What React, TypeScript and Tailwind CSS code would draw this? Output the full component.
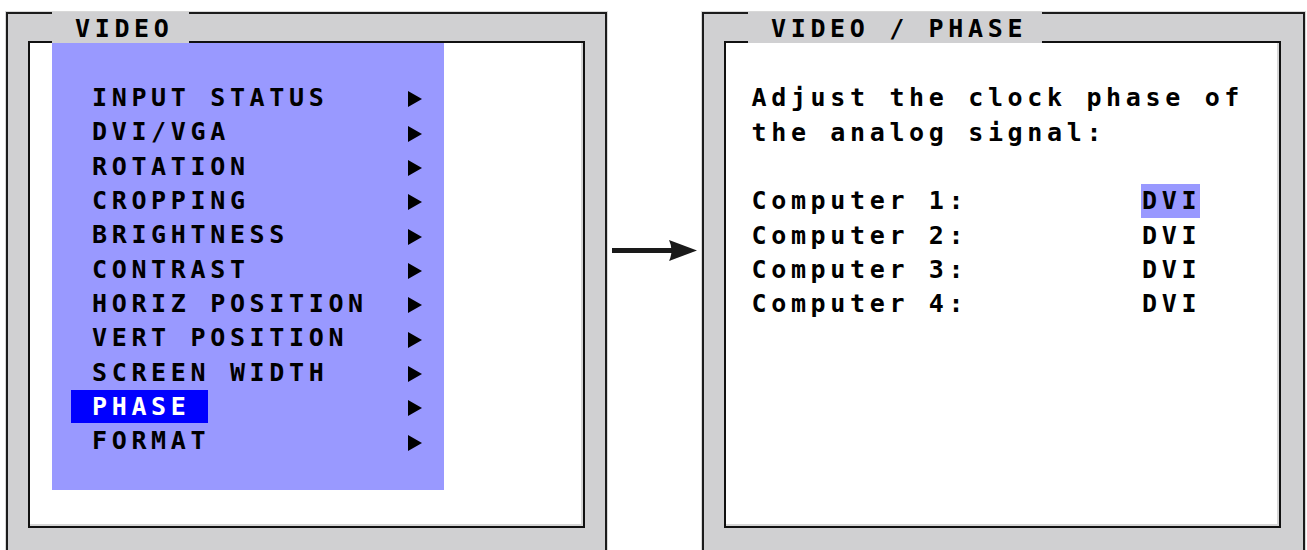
const menuItems = [
  "INPUT STATUS",
  "DVI/VGA",
  "ROTATION",
  "CROPPING",
  "BRIGHTNESS",
  "CONTRAST",
  "HORIZ POSITION",
  "VERT POSITION",
  "SCREEN WIDTH",
  "PHASE",
  "FORMAT",
];

const computers = ["Computer 1:", "Computer 2:", "Computer 3:", "Computer 4:"];

const mono = "font-['DejaVu_Sans_Mono',monospace] font-bold text-[25px] tracking-[4.65px]";

function Tab({ title, width }: { title: string; width: string }) {
  return (
    <div
      className={`absolute top-[-2px] left-[44px] z-10 h-[31px] leading-[31px] pt-[1px] bg-[#d0d0d2] pl-[23px] text-black whitespace-pre ${mono} ${width}`}
    >
      {title}
    </div>
  );
}

function Panel({
  title,
  tabWidth,
  width,
  children,
}: {
  title: string;
  tabWidth: string;
  width: string;
  children: React.ReactNode;
}) {
  return (
    <div
      className={`relative shrink-0 h-[560px] bg-[#d0d0d2] border-2 border-[#1c1c1c] shadow-[0_0_0_1px_#d8d8d8] pl-[20px] pt-[27px] ${width}`}
    >
      <Tab title={title} width={tabWidth} />
      <div className="w-[557px] h-[487px] bg-white border-2 border-[#111] shadow-[inset_-2px_-2px_0_#d6d6d6] overflow-hidden">
        {children}
      </div>
    </div>
  );
}

function Caret() {
  return (
    <svg width="14" height="16" viewBox="0 0 14 16" className="shrink-0">
      <polygon points="0,0 14,8 0,16" fill="#000" />
    </svg>
  );
}

function Menu() {
  return (
    <div className="ml-[22px] w-[392px] h-[447px] bg-[#9999ff] pt-[39px]">
      {menuItems.map((item) => {
        const active = item === "PHASE";
        return (
          <div key={item} className="flex items-center h-[34.35px] leading-[34.35px]">
            <div className="w-[356px] shrink-0">
              {active ? (
                <span
                  className={`inline-block ml-[19px] pl-[21px] w-[137px] h-[33px] leading-[33px] bg-[#0000ff] text-white whitespace-pre ${mono}`}
                >
                  {item}
                </span>
              ) : (
                <span className={`inline-block ml-[40px] text-black whitespace-pre ${mono}`}>
                  {item}
                </span>
              )}
            </div>
            <Caret />
          </div>
        );
      })}
    </div>
  );
}

function PhaseScreen() {
  return (
    <div className={`pl-[25.5px] pt-[38.4px] text-black leading-[34.35px] ${mono}`}>
      <div className="whitespace-pre">Adjust the clock phase of</div>
      <div className="whitespace-pre">the analog signal:</div>
      <div className="h-[34.35px]" />
      {computers.map((c, i) => (
        <div key={c} className="flex h-[34.35px]">
          <div className="w-[389.5px] shrink-0 whitespace-pre">{c}</div>
          <span className={`inline-block w-[59px] h-[34px] pl-[1px] ${i === 0 ? "bg-[#9999ff]" : ""}`}>
            DVI
          </span>
        </div>
      ))}
    </div>
  );
}

export default function App() {
  return (
    <div className="w-[1307px] h-[550px] overflow-hidden bg-white flex items-start pt-[12px] pl-[6px]">
      <Panel title="VIDEO" tabWidth="w-[137px]" width="w-[601px]">
        <Menu />
      </Panel>
      <div className="w-[95px] shrink-0 pt-[228px] pl-[5px]">
        <svg width="86" height="22" viewBox="0 0 86 22">
          <rect x="0" y="8" width="62" height="5" fill="#1a1a1a" />
          <path d="M57 0 L85 10.5 L57 21 Q62 10.5 57 0 Z" fill="#1a1a1a" />
        </svg>
      </div>
      <Panel title="VIDEO / PHASE" tabWidth="w-[294px]" width="w-[603px]">
        <PhaseScreen />
      </Panel>
    </div>
  );
}
